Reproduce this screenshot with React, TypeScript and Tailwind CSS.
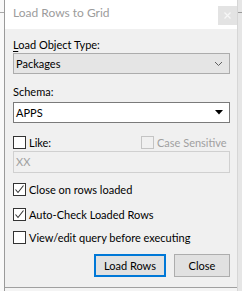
import React from 'react';

const Check = () => (
  <svg width="11" height="11" viewBox="0 0 11 11" className="block">
    <path d="M1.5 5.5 L4 8.5 L9.5 1.5" fill="none" stroke="#333333" strokeWidth="1.1" />
  </svg>
);

interface CheckBoxProps {
  label: string;
  checked?: boolean;
  disabled?: boolean;
}

const CheckBox: React.FC<CheckBoxProps> = ({ label, checked, disabled }) => (
  <div className="flex items-center h-[13px] whitespace-nowrap">
    <div
      className={`w-[13px] h-[13px] shrink-0 flex items-center justify-center border ${
        disabled ? 'border-[#c4c4c4] bg-[#f0f0f0]' : 'border-[#333333] bg-white'
      }`}
    >
      {checked && <Check />}
    </div>
    <span className={`ml-[3px] leading-[16px] ${disabled ? 'text-[#a0a0a0]' : 'text-black'}`}>{label}</span>
  </div>
);

export default function App() {
  return (
    <div className="w-[242px] h-[291px] flex overflow-hidden bg-[#f0f0f0] text-[11px] font-['Lato',sans-serif]">
      {/* window behind, left edge */}
      <div className="w-[4px] bg-[#f9f9f9]">
        <div className="h-[13px] border-b border-[#a8a8a8]" />
      </div>

      {/* dialog */}
      <div className="w-[234px] flex flex-col border-l border-r border-l-[#9a9a9a] border-r-[#d6d6d6]">
        {/* title bar */}
        <div className="h-[29px] bg-white flex items-start justify-between">
          <span className="ml-[8px] mt-[5px] leading-[16px] text-[12px] text-[#9c9c9c]">Load Rows to Grid</span>
          <div className="mt-[6px] w-[19px] h-[19px] bg-[#e3e3e3] flex items-center justify-center">
            <svg width="7" height="7" viewBox="0 0 7 7">
              <path d="M0.5 0.5 L6.5 6.5 M6.5 0.5 L0.5 6.5" stroke="#f7f7f7" strokeWidth="1.2" />
            </svg>
          </div>
        </div>

        {/* body */}
        <div className="flex-1 flex flex-col pl-[8px] pr-[7px] pt-[8px]">
          <div className="leading-[16px] text-black">
            <span className="underline underline-offset-2">L</span>oad Object Type:
          </div>
          <div className="h-[21px] border border-[#acacac] bg-[#e5e5e5] flex items-center justify-between pl-[2px] pr-[6px]">
            <span className="leading-[16px]">Packages</span>
            <svg width="9" height="6" viewBox="0 0 9 6">
              <path d="M1 1 L4.5 4.5 L8 1" fill="none" stroke="#606060" strokeWidth="1" />
            </svg>
          </div>

          <div className="mt-[10px] leading-[16px] text-black">Schema:</div>
          <div className="mt-[2px] h-[21px] border border-[#7a7a7a] bg-white flex items-center justify-between pl-[2px] pr-[6px]">
            <span className="leading-[16px]">APPS</span>
            <svg width="8" height="5" viewBox="0 0 8 5">
              <path d="M0 0 L8 0 L4 4.5 Z" fill="#000000" />
            </svg>
          </div>

          <div className="mt-[13px] flex items-center">
            <div className="w-[128px] shrink-0">
              <CheckBox label="Like:" />
            </div>
            <CheckBox label="Case Sensitive" disabled />
          </div>
          <div className="mt-[2px] h-[22px] border border-[#d0d0d0] bg-[#f0f0f0] flex items-center pl-[2px]">
            <span className="leading-[16px] text-[#a0a0a0]">XX</span>
          </div>

          <div className="mt-[10px]">
            <CheckBox label="Close on rows loaded" checked />
          </div>
          <div className="mt-[12px]">
            <CheckBox label="Auto-Check Loaded Rows" checked />
          </div>
          <div className="mt-[10px]">
            <CheckBox label="View/edit query before executing" />
          </div>

          <div className="mt-[10px] flex justify-end gap-[8px]">
            <button className="w-[72px] h-[23px] border-2 border-[#0078d7] bg-[#e1e1e1] leading-[16px] text-black">
              Load Rows
            </button>
            <button className="w-[56px] h-[23px] border border-[#adadad] bg-[#e1e1e1] leading-[16px] text-black">
              Close
            </button>
          </div>

          <div className="mt-[10px] -ml-[8px] -mr-[7px] flex-1 border-t border-[#a0a0a0] bg-[#f4f4f4]" />
        </div>
      </div>

      {/* window behind, right edge */}
      <div className="w-[4px] bg-[#e6e6e6]">
        <div className="h-[13px] border-b border-[#9a9a9a]" />
      </div>
    </div>
  );
}
